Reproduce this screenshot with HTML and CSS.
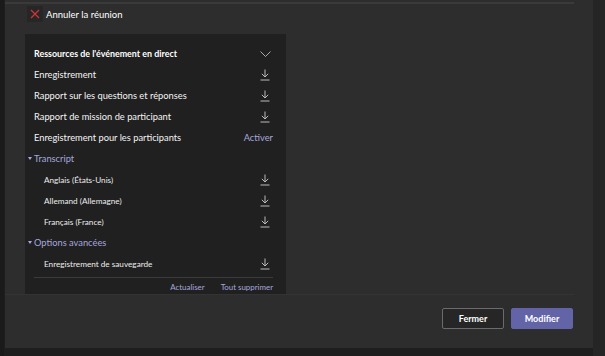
FILE: index.html
```html
<!DOCTYPE html>
<html lang="fr">
<head>
  <meta charset="UTF-8" />
  <title>Ressources de l'événement</title>
  <link rel="stylesheet" href="styles.css">
</head>
<body>
  <div class="page">
    <div class="dialog">
      <div class="top-line"></div>

      <div class="cancel">
        <span class="cancel-icon">
          <svg width="10" height="10" viewBox="0 0 10 10"><path d="M1 1 L9 9 M9 1 L1 9" stroke="#d13438" stroke-width="1.2" fill="none"/></svg>
        </span>
        <span>Annuler la réunion</span>
      </div>

      <div class="card">
        <div class="row head">
          <span>Ressources de l'événement en direct</span>
          <svg class="chevron" width="11" height="6" viewBox="0 0 11 6"><path d="M0.5 0.5 L5.5 5.5 L10.5 0.5" stroke="#aaa" fill="none"/></svg>
        </div>
        <div class="row">
          <span>Enregistrement</span>
          <svg class="dl" width="10" height="12" viewBox="0 0 10 12"><path d="M5 0.5 V8 M1.8 4.8 L5 8 L8.2 4.8 M0.5 11 H9.5" stroke="#bbb" fill="none"/></svg>
        </div>
        <div class="row">
          <span>Rapport sur les questions et réponses</span>
          <svg class="dl" width="10" height="12" viewBox="0 0 10 12"><path d="M5 0.5 V8 M1.8 4.8 L5 8 L8.2 4.8 M0.5 11 H9.5" stroke="#bbb" fill="none"/></svg>
        </div>
        <div class="row">
          <span>Rapport de mission de participant</span>
          <svg class="dl" width="10" height="12" viewBox="0 0 10 12"><path d="M5 0.5 V8 M1.8 4.8 L5 8 L8.2 4.8 M0.5 11 H9.5" stroke="#bbb" fill="none"/></svg>
        </div>
        <div class="row">
          <span>Enregistrement pour les participants</span>
          <span class="link">Activer</span>
        </div>

        <div class="row section">
          <span class="caret"></span>
          <span>Transcript</span>
        </div>
        <div class="row sub">
          <span>Anglais (États-Unis)</span>
          <svg class="dl" width="10" height="12" viewBox="0 0 10 12"><path d="M5 0.5 V8 M1.8 4.8 L5 8 L8.2 4.8 M0.5 11 H9.5" stroke="#bbb" fill="none"/></svg>
        </div>
        <div class="row sub">
          <span>Allemand (Allemagne)</span>
          <svg class="dl" width="10" height="12" viewBox="0 0 10 12"><path d="M5 0.5 V8 M1.8 4.8 L5 8 L8.2 4.8 M0.5 11 H9.5" stroke="#bbb" fill="none"/></svg>
        </div>
        <div class="row sub">
          <span>Français (France)</span>
          <svg class="dl" width="10" height="12" viewBox="0 0 10 12"><path d="M5 0.5 V8 M1.8 4.8 L5 8 L8.2 4.8 M0.5 11 H9.5" stroke="#bbb" fill="none"/></svg>
        </div>

        <div class="row section">
          <span class="caret"></span>
          <span>Options avancées</span>
        </div>
        <div class="row sub">
          <span>Enregistrement de sauvegarde</span>
          <svg class="dl" width="10" height="12" viewBox="0 0 10 12"><path d="M5 0.5 V8 M1.8 4.8 L5 8 L8.2 4.8 M0.5 11 H9.5" stroke="#bbb" fill="none"/></svg>
        </div>

        <div class="card-footer">
          <span class="link">Actualiser</span>
          <span class="link">Tout supprimer</span>
        </div>
      </div>

      <div class="divider"></div>

      <div class="actions">
        <button type="button" class="btn btn-secondary">Fermer</button>
        <button type="button" class="btn btn-primary">Modifier</button>
      </div>
    </div>
    <div class="side"></div>
  </div>
</body>
</html>
```

FILE: styles.css
```css
* {
  box-sizing: border-box;
  margin: 0;
  padding: 0;
}

body {
  background: #1e1e1e;
  font-family: Lato, 'Open Sans', sans-serif;
  color: #fff;
  width: 605px;
  height: 356px;
  overflow: hidden;
}

.page {
  display: flex;
  padding-left: 1px;
  height: 356px;
  border-left: 4px solid #1a1a1a;
}

.dialog {
  width: 588px;
  height: 348px;
  background: #2d2d2d;
  display: flex;
  flex-direction: column;
}

.side {
  width: 12px;
  height: 356px;
  background: #252525;
}

.top-line {
  height: 2px;
  margin-top: 2px;
  width: 569px;
  background: #3a3a3a;
}

.cancel {
  display: flex;
  align-items: center;
  gap: 3px;
  margin: 2px 0 0 22px;
  font-size: 9.5px;
  height: 16px;
}

.cancel-icon {
  width: 16px;
  height: 16px;
  background: #262626;
  display: flex;
  align-items: center;
  justify-content: center;
}

.card {
  margin: 12px 0 0 20px;
  width: 261px;
  height: 260px;
  background: #202020;
  padding: 9px 13px 0 9px;
}

.row {
  height: 21px;
  display: flex;
  align-items: center;
  justify-content: space-between;
  font-size: 9.3px;
  color: #f4f4f4;
}

.row.head {
  font-weight: 700;
  font-size: 8.9px;
  color: #fff;
}

.chevron {
  margin-right: 2px;
}

.dl {
  margin-right: 3px;
}

.row.section {
  justify-content: flex-start;
  margin-left: -6px;
  color: #a6a7dc;
  gap: 2px;
  font-size: 9.3px;
}

.caret {
  width: 0;
  height: 0;
  border-left: 2.5px solid transparent;
  border-right: 2.5px solid transparent;
  border-top: 3px solid #a6a7dc;
}

.row.sub {
  padding-left: 10px;
  font-size: 8.2px;
  color: #ececec;
}

.link {
  color: #a6a7dc;
}

.card-footer {
  border-top: 1px solid #3b3b3b;
  margin-top: 3px;
  padding-top: 4px;
  display: flex;
  justify-content: flex-end;
  gap: 16px;
  font-size: 7.9px;
}

.divider {
  height: 1px;
  width: 569px;
  background: #333;
}

.actions {
  display: flex;
  justify-content: flex-end;
  gap: 7px;
  margin: 13px 20px 0 0;
}

.btn {
  width: 62px;
  height: 21px;
  font-family: inherit;
  font-size: 9px;
  font-weight: 700;
  color: #fff;
  border-radius: 2px;
  cursor: pointer;
}

.btn-secondary {
  background: #262626;
  border: 1px solid #6b6b6b;
}

.btn-primary {
  background: #6264a7;
  border: 1px solid #6264a7;
}
```
